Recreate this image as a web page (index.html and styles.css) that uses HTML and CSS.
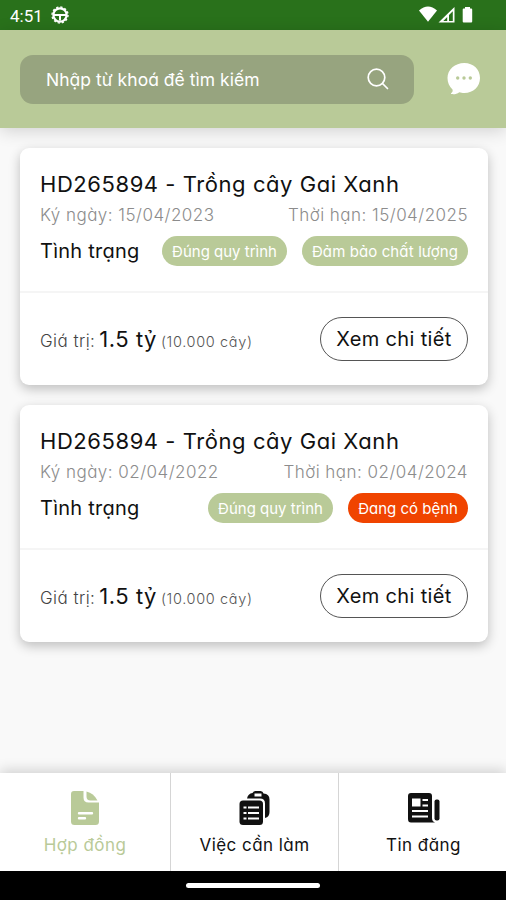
FILE: index.html
```html
<!DOCTYPE html>
<html lang="vi">
<head>
    <meta charset="UTF-8">
    <meta name="viewport" content="width=device-width, initial-scale=1.0">
    <title>Hợp đồng</title>

    <link rel="stylesheet" href="styles.css">
</head>
<body>
    <div class="app">
        <div class="status-bar">
            <span class="time">4:51</span>
            <svg class="wheel" width="18" height="18" viewBox="0 0 18 18" fill="none" stroke="#fff">
                <circle cx="9" cy="9" r="6.6" stroke-width="2.2"/>
                <circle cx="9" cy="9" r="8" stroke-width="1.4" stroke-dasharray="2.2 2"/>
                <path d="M3 9h12" stroke-width="2"/>
                <path d="M9 9.500v5" stroke-width="2"/>
            </svg>
            <svg class="signals" width="56" height="18" viewBox="0 0 56 18" fill="#fff">
                <path d="M0 4.6Q9-3.4 18 4.600L9 15.800z"/>
                <path fill-rule="evenodd" d="M35.500 1v15.500H19.500zM33.800 5.200L30 9v6h3.800zM28.200 11l-3.900 4h3.900z"/>
                <path d="M46 1h5v1.500h1.200q1 0 1 1v12q0 1-1 1h-7.500q-1 0-1-1v-12q0-1 1-1H46z"/>
            </svg>
        </div>

        <div class="header">
            <div class="search">
                <span class="search-text">Nhập từ khoá để tìm kiếm</span>
                <svg width="22" height="22" viewBox="0 0 22 22" fill="none" stroke="#fff" stroke-width="1.7" stroke-linecap="round">
                    <circle cx="9.500" cy="9.500" r="8.300"/>
                    <path d="M15.500 15.500l5 5"/>
                </svg>
            </div>
            <svg class="chat" width="34" height="32" viewBox="0 0 34 32">
                <path fill="#fff" d="M17.300 0C26.500 0 33 6.500 33 15s-6.500 15-15.700 15c-2 0-3.400-.3-5-.8-2.500 1.800-5 2.300-7.800 1.900-.7-.1-.7-.8-.2-1.100 1.300-.9 1.600-2 1.200-3.500C2.200 23.500.5 19.500.5 15 .5 6.500 8 0 17.300 0z"/>
                <g fill="#b9ca98">
                    <circle cx="10.700" cy="15" r="1.700"/>
                    <circle cx="17" cy="15" r="1.700"/>
                    <circle cx="23.300" cy="15" r="1.700"/>
                </g>
            </svg>
        </div>

        <div class="content">
            <div class="card">
                <div class="card-info">
                    <div class="card-title">HD265894 - Trồng cây Gai Xanh</div>
                    <div class="card-dates">
                        <span>Ký ngày: 15/04/2023</span>
                        <span>Thời hạn: 15/04/2025</span>
                    </div>
                    <div class="card-status">
                        <span class="status-label">Tình trạng</span>
                        <span class="tag">Đúng quy trình</span>
                        <span class="tag tag-quality">Đảm bảo chất lượng</span>
                    </div>
                </div>
                <div class="card-footer">
                    <div class="price">
                        <span class="price-label">Giá trị:</span>
                        <span class="price-value">1.5 tỷ</span>
                        <span class="price-count">(10.000 cây)</span>
                    </div>
                    <button class="detail">Xem chi tiết</button>
                </div>
            </div>

            <div class="card">
                <div class="card-info">
                    <div class="card-title">HD265894 - Trồng cây Gai Xanh</div>
                    <div class="card-dates">
                        <span>Ký ngày: 02/04/2022</span>
                        <span>Thời hạn: 02/04/2024</span>
                    </div>
                    <div class="card-status">
                        <span class="status-label">Tình trạng</span>
                        <span class="tag">Đúng quy trình</span>
                        <span class="tag tag-sick">Đang có bệnh</span>
                    </div>
                </div>
                <div class="card-footer">
                    <div class="price">
                        <span class="price-label">Giá trị:</span>
                        <span class="price-value">1.5 tỷ</span>
                        <span class="price-count">(10.000 cây)</span>
                    </div>
                    <button class="detail">Xem chi tiết</button>
                </div>
            </div>
        </div>

        <div class="tab-bar">
            <div class="tab-item active">
                <svg width="36" height="36" viewBox="0 0 36 36">
                    <path fill="currentColor" d="M7 1h9.500v6.500q0 5 5 5H32v19q0 3.500-3.500 3.500H7.500Q4 35 4 31.500V4q0-3 3-3z"/>
                    <path fill="currentColor" d="M19.500 1.500q7 1.500 11 9h-7q-4 0-4-4z"/>
                    <path stroke="#fff" stroke-width="2.400" stroke-linecap="round" d="M12 23.300h13M12 28.300h6"/>
                </svg>
                <span class="tab-label">Hợp đồng</span>
            </div>
            <div class="tab-item tab-work">
                <svg width="36" height="36" viewBox="0 0 36 36">
                    <path fill="currentColor" d="M10 8.500q1-5 5.500-5.500Q16.500 1 18.500 1h5q2.500 0 3 2.500 6 .5 6 6v12.500q0 5-4.500 6V13.500q0-5-5-5z"/>
                    <path fill="#fff" d="M17.500 3.500h7v3h-7z"/>
                    <rect fill="currentColor" x="2.500" y="10.500" width="23.500" height="24.500" rx="3.500"/>
                    <path stroke="#fff" stroke-width="2" d="M6.500 17.500h3M11 17.500h11M6.500 23h3M11 23h11M6.500 28.500h3M11 28.500h11"/>
                </svg>
                <span class="tab-label">Việc cần làm</span>
            </div>
            <div class="tab-item tab-news">
                <svg width="36" height="36" viewBox="0 0 36 36">
                    <path fill="currentColor" d="M5 3h18q3 0 3 3v22q0 3.500 3 4.500H5q-3 0-3-3.500V6q0-3 3-3z"/>
                    <rect fill="currentColor" x="28.500" y="9.500" width="5" height="21" rx="2"/>
                    <path fill="#fff" d="M6 8.500h8.500v8H6z"/>
                    <path stroke="#fff" stroke-width="2" d="M16.500 10H22M16.500 15.500H22M6 21H22M6 26.500H22"/>
                </svg>
                <span class="tab-label">Tin đăng</span>
            </div>
        </div>
        <div class="home-bar"><i></i></div>
    </div>
</body>
</html>
```

FILE: styles.css
```css
*{
    padding: 0;
    margin: 0;
    box-sizing: border-box;
}

body {
    font-family: Inter, "Open Sans", sans-serif;
    font-feature-settings: "cv11";
    color: #111;
}

.app {
    width: 100%;
    height: 900px;
    display: flex;
    flex-direction: column;
    overflow: hidden;
    background: #f9f9f9;
}

.status-bar {
    height: 30px;
    display: flex;
    align-items: center;
    padding: 0 31px 0 10px;
    background: #29711b;
    color: #fff;
}

.status-bar .time {
    width: 41px;
    font-family: Roboto, sans-serif;
    font-size: 17px;
    line-height: 32px;
    padding-top: 2px;
}

.status-bar .signals {
    margin-left: auto;
}

.header {
    height: 98px;
    flex-shrink: 0;
    display: flex;
    align-items: center;
    justify-content: space-between;
    padding: 0 25px 0 20px;
    background: #b9ca98;
    box-shadow: 0 3px 16px rgba(0, 0, 0, .16);
}

.search {
    width: 394px;
    height: 49px;
    display: flex;
    align-items: center;
    justify-content: space-between;
    padding: 0 25px 0 26px;
    border-radius: 13px;
    background: #97a47f;
    color: #fff;
}

.search-text {
    font-size: 17.5px;
    letter-spacing: .03px;
}

.content {
    flex: 1;
    display: flex;
    flex-direction: column;
    gap: 20px;
    padding: 20px 18px 0 20px;
}

.card {
    height: 237px;
    border-radius: 9px;
    background: #fff;
    box-shadow: 0 4px 12px rgba(0, 0, 0, .24);
}

.card-info {
    height: 145px;
    padding: 20px 20px 0;
    border-bottom: 2px solid #f5f5f5;
}

.card-title {
    font-size: 22px;
    line-height: 32px;
    letter-spacing: .56px;
    white-space: nowrap;
}

.card-dates {
    display: flex;
    justify-content: space-between;
    font-size: 17px;
    font-weight: 300;
    line-height: 30px;
    letter-spacing: .47px;
    color: #8c8c8c;
}

.card-status {
    display: flex;
    align-items: center;
    gap: 15px;
    padding-top: 6px;
}

.status-label {
    margin-right: auto;
    font-size: 20px;
    line-height: 30px;
    letter-spacing: .25px;
}

.tag {
    width: 125px;
    height: 30px;
    border-radius: 15px;
    background: #b9ca98;
    color: #fff;
    font-size: 15px;
    line-height: 31px;
    text-align: center;
    white-space: nowrap;
}

.tag-quality {
    width: 166px;
    letter-spacing: .1px;
}

.tag-sick {
    width: 120px;
    background: #f04400;
}

.card-footer {
    height: 92px;
    display: flex;
    align-items: center;
    justify-content: space-between;
    padding: 0 20px;
}

.price {
    display: flex;
    align-items: baseline;
    gap: 4px;
    white-space: nowrap;
}

.price-label {
    font-size: 17px;
    font-weight: 300;
    letter-spacing: .45px;
    color: #444;
}

.price-value {
    font-size: 22px;
    letter-spacing: .5px;
}

.price-count {
    font-size: 14.5px;
    font-weight: 300;
    letter-spacing: .65px;
    color: #555;
}

.detail {
    width: 148px;
    height: 44px;
    border: 1px solid #555;
    border-radius: 22px;
    background: #fff;
    color: #111;
    font-family: inherit;
    font-feature-settings: inherit;
    font-size: 20px;
    letter-spacing: .35px;
    white-space: nowrap;
}

.tab-bar {
    height: 98px;
    flex-shrink: 0;
    display: flex;
    background: #fff;
    box-shadow: 0 -3px 12px rgba(0, 0, 0, .16);
}

.tab-item {
    width: 168px;
    display: flex;
    flex-direction: column;
    align-items: center;
    padding-top: 17px;
    border-right: 1px solid #d5d5d5;
}

.tab-item:first-child {
    width: 171px;
}

.tab-item:last-child {
    flex: 1;
    padding-left: 2px;
    border-right: none;
}

.tab-item.active {
    color: #b9ca98;
}

.tab-label {
    font-size: 17px;
    line-height: 24px;
    padding-top: 7px;
    letter-spacing: .45px;
    white-space: nowrap;
}

.home-bar {
    height: 29px;
    flex-shrink: 0;
    display: flex;
    justify-content: center;
    padding-top: 12px;
    background: #000;
}

.home-bar i {
    width: 134px;
    height: 5px;
    border-radius: 3px;
    background: #fff;
}
```
